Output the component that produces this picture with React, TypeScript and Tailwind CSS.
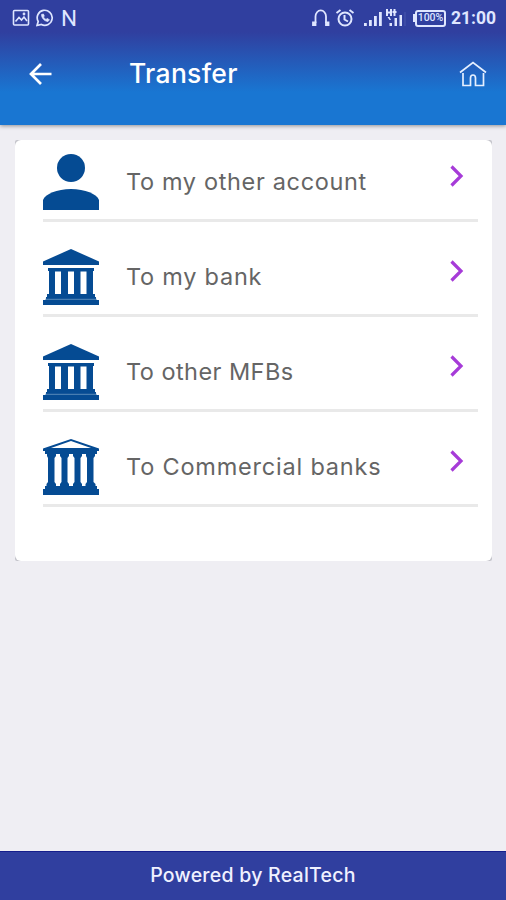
import type { ReactNode } from "react";

const PersonIcon = () => (
  <svg viewBox="0 0 56 56" className="h-14 w-14 fill-[#054b93]">
    <circle cx="28" cy="14" r="14" />
    <path d="M0 56V46C2 40 14 35 28 35s26 5 28 11v10Z" />
  </svg>
);

const BankIcon = () => (
  <svg viewBox="0 0 56 56" className="h-14 w-14 fill-[#054b93]">
    <path d="M28 0 56 12.500V16H0v-3.500Z" />
    <path d="M5 19h46v3h-1v23h2v4H4v-4h2V22H5Z" />
    <path d="M3 48h50v3h3v5H0v-5h3Z" />
    <path d="M12 22.500h6V45h-6ZM25 22.500h6V45h-6ZM37.500 22.500h6V45h-6Z" fill="#fff" />
    <path d="M2 50.300h52" stroke="#6f9ac4" strokeWidth=".8" />
  </svg>
);

const ColumnsIcon = () => (
  <svg viewBox="0 0 56 56" className="h-14 w-14 fill-[#054b93]">
    <path fillRule="evenodd" d="M28 0 56 9.500v2.500h-2v3H2v-3H0V9.500ZM28 2 8 9h40Z" />
    <path d="M4 15h9v2l-1.500 2v24l1.500 2v2H3.500v-2L5 43V19l-1-2ZM17 15h9v2l-1.500 2v24l1.500 2v2h-9v-2l1.500-2V19L17 17ZM30 15h9v2l-1.500 2v24l1.500 2v2h-9v-2l1.500-2V19L30 17ZM43 15h9v2l-1.500 2v24l2 2v2H42.500v-2l1.500-2V19l-1-2Z" />
    <path d="M2 47h52v3h2v6H0v-6h2Z" />
  </svg>
);

const StatusBar = () => (
  <div className="flex h-9 items-center justify-between pl-3 pr-[11px] text-[#dfe6ff]">
    <div className="flex items-center gap-[6px]">
      <svg viewBox="0 0 18 18" className="h-[18px] w-[18px]" fill="none" stroke="currentColor" strokeWidth="1.600">
        <rect x="1.500" y="1.500" width="15" height="14.500" rx="1" />
        <path d="m3.500 12.500 3.500-4 2.500 2.500 2.500-3 3 4" />
        <circle cx="12" cy="5" r=".6" />
      </svg>
      <svg viewBox="0 0 18 18" className="h-[18px] w-[18px]" fill="none" stroke="currentColor" strokeWidth="1.700">
        <path d="m1 16.500 1.200-4A7.500 7.500 0 1 1 5.400 15.500Z" />
        <path d="M5.500 5.500c0 3.600 3 6.800 6.500 7l1.400-1.800-2.400-1.300-1 1C8.700 10 8 9 7.500 8l.8-1-.9-2Z" fill="currentColor" strokeWidth=".7" />
      </svg>
      <span className="ml-px font-['Roboto'] text-[22.500px] leading-[18px] tracking-tight">N</span>
    </div>
    <div className="flex items-center">
      <svg viewBox="0 0 20 18" className="h-[18px] w-5" fill="none" stroke="currentColor" strokeWidth="1.800">
        <path d="M4.500 14V7.500a5.200 6 0 0 1 10.500 0V14" />
        <path d="M2 13.500h2.500V16H2ZM15 13.500h2.500V16H15Z" fill="currentColor" />
      </svg>
      <svg viewBox="0 0 20 18" className="ml-1 h-[18px] w-5" fill="none" stroke="currentColor" strokeWidth="2">
        <circle cx="10" cy="10" r="6.500" />
        <path d="m1.500 4 4-3M18.500 4l-4-3M9.500 6v4.500l3.500 2" />
      </svg>
      <svg viewBox="0 0 44 18" className="ml-[9px] h-[18px] w-[44px] fill-current">
        <path d="M0 14h2.800v3H0ZM5 11h2.800v6H5ZM10 7h2.800v10H10ZM15 3h2.800v14H15Z" />
        <path d="M22 0h2v2.500h2V0h2v7h-2V4.500h-2V7h-2ZM28.500 2h4v2h-4ZM29.500 0h2v7h-2ZM25.500 14H28v3h-2.500ZM30.500 9H33v8h-2.500ZM35.500 6H38v11h-2.500ZM23.500 8h2l1.500 3h-1.500Z" />
        <path d="M40.500 3h1v14h-1Z" opacity=".15" />
      </svg>
      <div className="ml-[5px] h-2 w-[2px] bg-current" />
      <div className="flex h-[17px] w-[31px] items-center justify-center rounded-[3px] border-2 border-current font-['Roboto'] text-[10.500px] font-medium leading-none">
        100%
      </div>
      <span className="ml-[5px] w-[44px] whitespace-nowrap font-['Roboto'] text-[17.500px] font-bold leading-[18px]">21:00</span>
    </div>
  </div>
);

const Header = () => (
  <header className="relative h-[125px] bg-[linear-gradient(to_bottom,#303f9f_0px,#303f9f_32px,#1976d2_92px,#1976d2_125px)] shadow-[0_1px_4px_rgba(0,0,0,0.4)]">
    <StatusBar />
    <div className="flex h-[76px] items-center pl-[28px] pr-5 text-white">
      <svg viewBox="0 0 24 24" className="h-6 w-6" fill="none" stroke="currentColor" strokeWidth="2.700">
        <path d="M23.500 12H3M13 2 3 12l10 10" />
      </svg>
      <h1 className="-mt-px ml-[77px] text-[26.500px] font-medium tracking-[0.3px]">Transfer</h1>
      <svg viewBox="0 0 28 26" className="ml-auto mr-[-1px] h-[26px] w-7" fill="none" stroke="#e5efff" strokeWidth="1.700">
        <path d="m1 11.500 13-10L27 11.500" />
        <path d="M4 12v12.500h7.500V17a2.500 3 0 0 1 5 0v7.500H24.500V12" />
      </svg>
    </div>
  </header>
);

type TransferRowProps = {
  icon: ReactNode;
  label: string;
  className: string;
};

const TransferRow = ({ icon, label, className }: TransferRowProps) => (
  <div className="flex h-[95px] items-end border-b-3 border-[#e9e9e9] pb-[9px]">
    {icon}
    <span className={`ml-[27px] flex h-14 items-center whitespace-nowrap text-[23.500px] text-[#656565] ${className}`}>
      {label}
    </span>
    <svg viewBox="0 0 14 22" className="mb-[23px] ml-auto mr-[14px] h-[22px] w-[14px]" fill="none" stroke="#a63bd8" strokeWidth="3.200">
      <path d="m1.500 1.500 9.500 9.500-9.500 9.500" />
    </svg>
  </div>
);

export default function App() {
  return (
    <div className="flex h-[900px] w-[506px] flex-col bg-[#efeef3] font-['Inter',sans-serif]">
      <Header />
      <main className="flex-1 pl-[15px] pr-[14px] pt-[15px]">
        <div className="rounded-[2px] bg-[#c5c5cc]">
          <div className="h-[421px] rounded-md bg-white pl-[28px] pr-[14px]">
            <div className="-translate-y-[13px]">
              <TransferRow icon={<PersonIcon />} label="To my other account" className="tracking-[0.65px]" />
              <TransferRow icon={<BankIcon />} label="To my bank" className="tracking-[0.75px]" />
              <TransferRow icon={<BankIcon />} label="To other MFBs" className="tracking-[0.45px]" />
              <TransferRow icon={<ColumnsIcon />} label="To Commercial banks" className="tracking-[0.8px]" />
            </div>
          </div>
        </div>
      </main>
      <footer className="flex h-[49px] items-center justify-center border-t border-[#151e8c] bg-[#303f9f] text-[19.500px] font-medium tracking-[0.25px] text-[#f0f1ff]">
        Powered by RealTech
      </footer>
    </div>
  );
}
